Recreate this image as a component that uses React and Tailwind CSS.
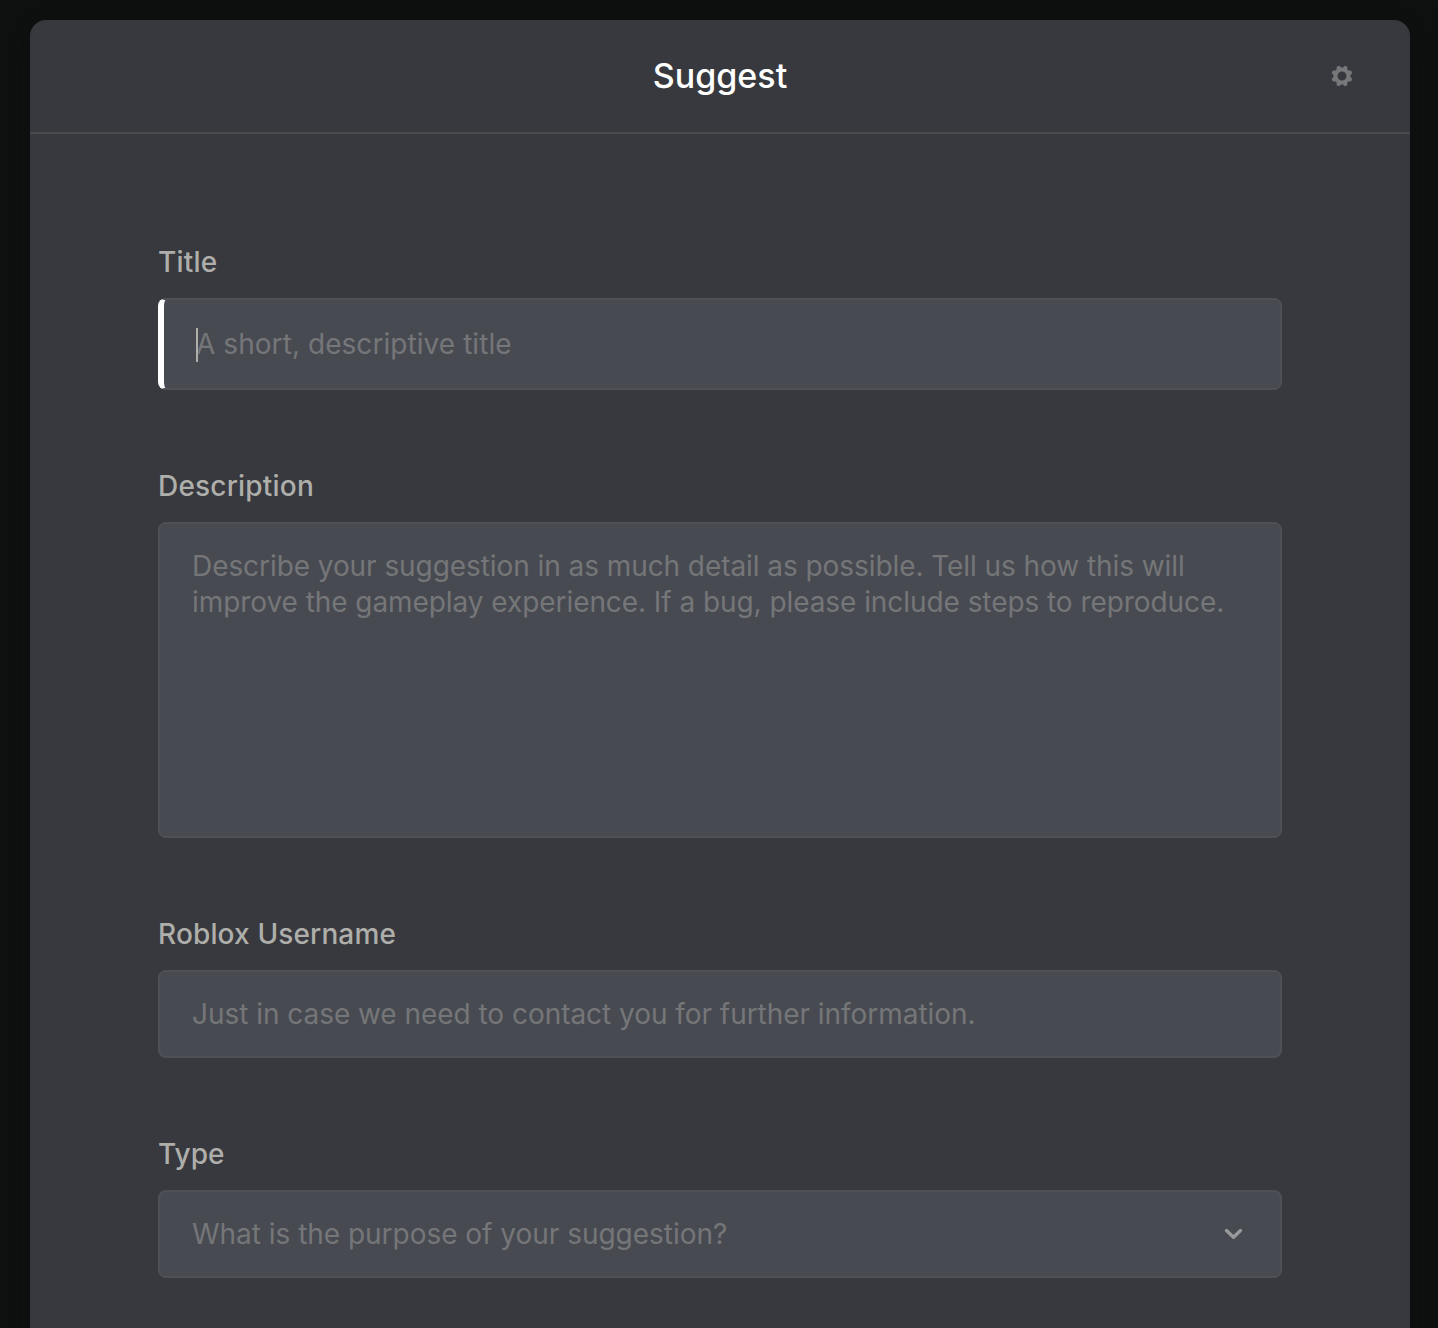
const TEETH = [22.5, 67.5, 112.5, 157.5, 202.5, 247.5, 292.5, 337.5];

function Gear() {
  return (
    <svg width="22" height="22" viewBox="-11 -11 22 22" className="block">
      <circle r="6.5" fill="none" stroke="#77787a" strokeWidth="4" />
      {TEETH.map((a) => (
        <path key={a} d="M-2.5 -7.5 L-1.5 -10.5 H1.5 L2.5 -7.5 Z" fill="#77787a" transform={`rotate(${a})`} />
      ))}
    </svg>
  );
}

function Field({ label, labelClass, className, children }) {
  return (
    <div>
      <div className={`h-9 text-[28px] leading-9 font-medium whitespace-nowrap text-[#aeaeaa] ${labelClass}`}>{label}</div>
      <div className={`mt-[18px] rounded-[8px] border-2 border-[#4f5057] bg-[#484a52] text-[28px] leading-9 whitespace-nowrap text-[#757678] ${className}`}>
        {children}
      </div>
    </div>
  );
}

export default function App() {
  return (
    <div className="h-[1328px] overflow-hidden bg-[#0f1110] pt-5 pr-7 pl-[30px] font-['Inter',sans-serif]">
      <div className="h-[1400px] rounded-t-[16px] bg-[#38393e] shadow-[0_0_30px_rgba(12,10,12,0.6)]">
        <header className="grid h-[114px] grid-cols-[1fr_auto_1fr] items-center border-b-2 border-[#4a4a4e] px-14">
          <span />
          <h1 className="text-[34px] leading-10 font-medium text-white">Suggest</h1>
          <div className="justify-self-end pr-px"><Gear /></div>
        </header>
        <main className="flex flex-col px-32 pt-[110px]">
          <Field label="Title" labelClass="tracking-[0.2px]" className="h-[92px] border-l-[6px] border-l-white py-[26px] pl-8">
            <div className="relative">
              <span className="tracking-[0.06px]">A short, descriptive title</span>
              <span className="absolute top-[2px] left-0 h-[34px] w-[2px] bg-[#aeaeaa]" />
            </div>
          </Field>
          <div className="mt-[78px]">
            <Field label="Description" labelClass="tracking-[0.2px]" className="h-[316px] py-6 pl-8">
              <div><span className="tracking-[-0.07px]">Describe your suggestion in as much detail as possible. Tell us how this will</span></div>
              <div><span className="tracking-[-0.065px]">improve the gameplay experience. If a bug, please include steps to reproduce.</span></div>
            </Field>
          </div>
          <div className="mt-[78px]">
            <Field label="Roblox Username" labelClass="tracking-[0.14px]" className="h-[88px] py-6 pl-8">
              <span className="tracking-[-0.04px]">Just in case we need to contact you for further information.</span>
            </Field>
          </div>
          <div className="mt-[78px]">
            <Field label="Type" labelClass="tracking-[0px]" className="flex h-[88px] items-center justify-between pr-[37px] pl-8">
              <span className="tracking-[-0.025px]">What is the purpose of your suggestion?</span>
              <svg width="19" height="12" viewBox="0 0 19 12" fill="none" stroke="#98999a" strokeWidth="3.4" strokeLinecap="round" strokeLinejoin="round">
                <path d="M2.5 2.6 L9.5 9.2 L16.5 2.6" />
              </svg>
            </Field>
          </div>
        </main>
      </div>
    </div>
  );
}
